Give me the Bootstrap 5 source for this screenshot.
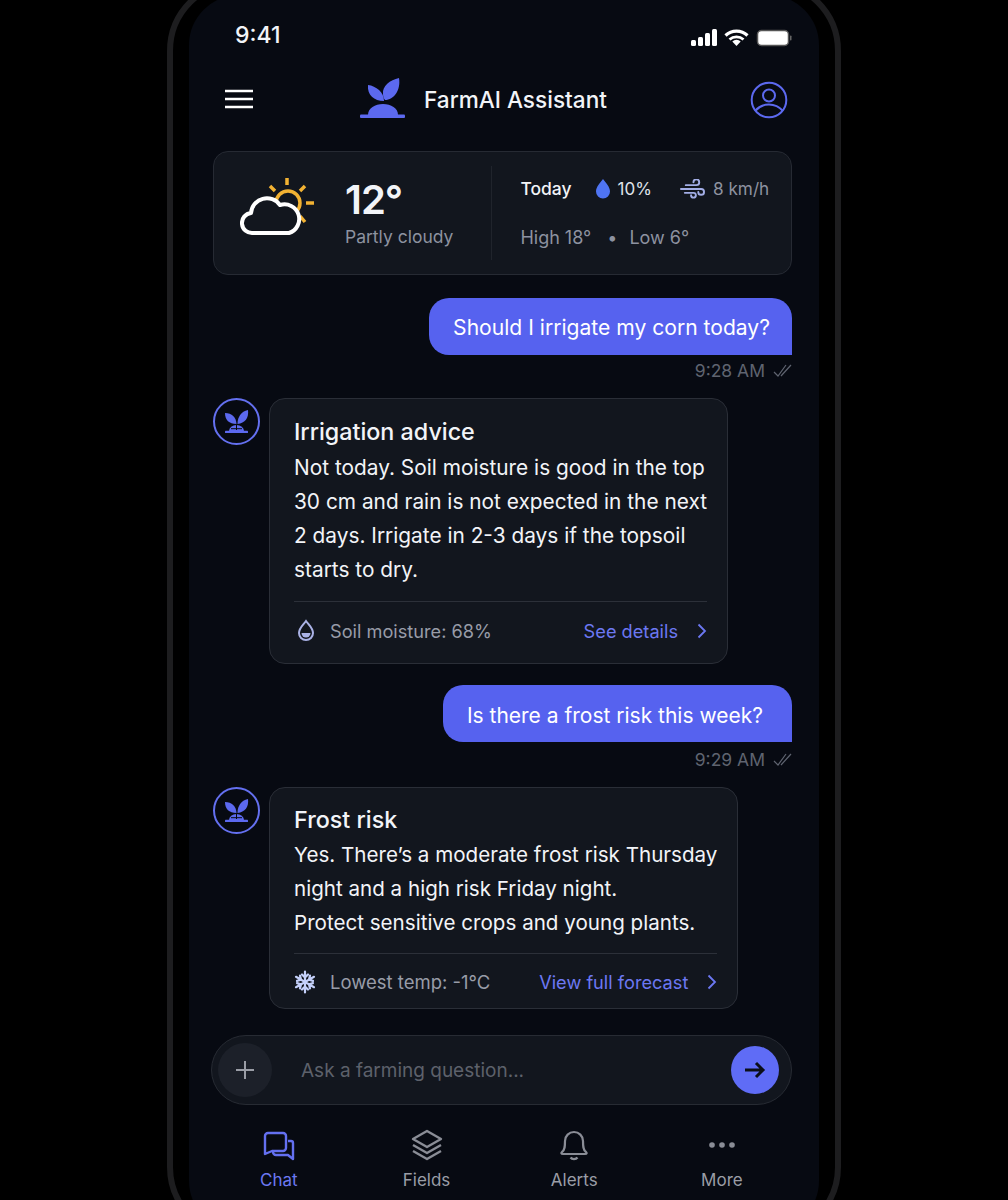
<!DOCTYPE html>
<html lang="en">
<head>
<meta charset="UTF-8">
<meta name="viewport" content="width=device-width, initial-scale=1.0">
<title>FarmAI Assistant</title>
<link href="https://cdn.jsdelivr.net/npm/bootstrap@5.3.3/dist/css/bootstrap.min.css" rel="stylesheet">
<style>
html, body { height: 1200px; overflow: hidden; background: #000; }
body { font-family: Inter, "Liberation Sans", sans-serif; color: #f2f4f8; }
.phone { width: 674px; margin: -21px 0 0 167px; border: 6px solid #1d1d1f; border-radius: 72px; padding: 10px 16px 0; background: #000; height: 1260px; }
.screen { height: 1236px; border-radius: 50px; background: #070a12; padding: 0 27px 0 24px; }
.status { height: 37px; padding: 22px 0 0 22px; box-sizing: content-box; }
.clock { font-size: 23px; font-weight: 500; line-height: 37px; }
.status-icons { margin-top: 4px; }
.head-row { height: 70px; margin-top: 11px; }
.burger { margin: 0 0 2px 12px; }
.brand { margin-left: 107px; }
.brand svg { margin: 0 19px 4px 0; }
.app-title { font-size: 22.6px; font-weight: 500; }
.wx-card { height: 124px; margin-top: 16px; background: #12161e; border: 1px solid #262a33; border-radius: 15px; color: #f2f4f8; }
.wx-icon { margin: 0 29px 0 26px; flex: none; }
.temp { font-size: 40px; font-weight: 600; line-height: 46px; letter-spacing: -1px; }
.muted { color: #8d92a0; }
.wx-sub { font-size: 17.5px; line-height: 24px; margin-top: 2px; }
.wx-left { margin-right: 38px; }
.wx-div { width: 1px; height: 94px; background: #20242c; }
.wx-right { font-size: 18px; line-height: 24px; margin-left: 28px; }
.wx-now { font-size: 17.5px; }
.wx-val { font-size: 17px; margin-right: 28px; color: #dfe2ea; }
.wx-wind { font-size: 17.2px; }
.wx-range { margin-top: 25px; }
.wx-dot { margin: 0 12px 0 16px; }
.q-one { margin-top: 23px; }
.q-two { margin-top: 21px; }
.bubble { background: #5662ef; color: #fff; font-size: 21.1px; height: 57px; border-radius: 20px 20px 0 20px; padding: 3px 22px 0 24px; }
.bubble-short { padding: 4px 29px 0 24px; font-size: 21px; }
.stamp { font-size: 17.5px; line-height: 24px; color: #5f6470; }
.stamp-one { margin-top: 4px; margin-bottom: 15px; }
.stamp-two { margin-top: 6px; margin-bottom: 15px; }
.ai-avatar { width: 47px; height: 47px; border: 2px solid #6470f0; border-radius: 50%; flex: none; }
.msg { background: #12161e; border: 1px solid #2a2e37; border-radius: 16px; color: #f2f4f8; font-size: 20.85px; line-height: 34px; padding: 0 20px 0 24px; margin-left: 9px; }
.msg-tight { font-size: 20.6px; }
.msg-title { font-size: 23.3px; font-weight: 500; line-height: 34px; margin-top: 15px; margin-bottom: 1px; }
.msg-title-low { margin-top: 16px; margin-bottom: 2px; }
.msg-foot { border-top: 1px solid #2c3039; font-size: 18.2px; }
.foot-one { margin-top: 14px; height: 62px; padding-bottom: 3px; }
.foot-two { margin-top: 13px; height: 55px; padding-top: 2px; }
.foot-wide { font-size: 18.5px; }
.foot-icon-soil { margin: 0 15px 0 3px; }
.foot-icon-snow { margin-right: 14px; flex: none; }
.chev { margin-left: 19px; }
.accent { color: #6c78f2; }
.foot-label { color: #989ca8; }
.ask-bar { height: 70px; background: #12161e; border: 1px solid #272b33; border-radius: 35px; margin: 26px 0 0 -2px; padding: 0 12px 0 6px; font-size: 19px; color: #5d616b; }
.ask-text { margin-left: 29px; padding-top: 2px; }
.plus-btn { width: 54px; height: 54px; background: #1c2029; border-radius: 50%; flex: none; }
.send-btn { width: 48px; height: 48px; background: #5f6cf6; border-radius: 50%; flex: none; }
.tab-row { font-size: 17px; color: #9a9da6; margin: 24px 0 0 -8px; }
.tab-item { width: 147.7px; flex: none; }
.tab-item span { margin-top: 7px; }
.tab-on { color: #6c78f2; }
</style>
</head>
<body>

<div class="phone">
  <div class="screen">

    <!-- status bar -->
    <div class="status d-flex justify-content-between align-items-center">
      <span class="clock">9:41</span>
      <svg class="status-icons" width="102" height="20" viewBox="0 0 102 20">
        <g fill="#fff">
          <rect x="1" y="12" width="5" height="6" rx="1.5"/><rect x="8" y="9" width="5" height="9" rx="1.5"/><rect x="15" y="5" width="5" height="13" rx="1.5"/><rect x="22" y="1" width="5" height="17" rx="1.5"/>
          <path d="M46.500 18l-4.200-4.600a6 6 0 0 1 8.400 0z"/>
        </g>
        <g fill="none" stroke="#fff">
          <path d="M35.500 7.500a16 16 0 0 1 22 0" stroke-width="3.200"/><path d="M39.500 11.500a10.500 10.500 0 0 1 14 0" stroke-width="2.800"/>
        </g>
        <rect x="67.500" y="2.500" width="31" height="15" rx="4" fill="#fff" stroke="#555" stroke-width="1.500"/>
        <rect x="100" y="7.500" width="1.500" height="5" rx=".7" fill="#666"/>
      </svg>
    </div>

    <!-- header -->
    <div class="head-row d-flex align-items-center">
      <svg class="burger" width="28" height="20" viewBox="0 0 28 20" fill="none" stroke="#fff" stroke-width="2.600"><path d="M0 2h28M0 10h28M0 18h28"/></svg>
      <div class="brand d-flex align-items-center flex-grow-1">
        <svg width="45" height="40" viewBox="0 0 45 40" fill="#5c69ef">
          <path d="M8 7C16 8 24 14 24 23 14 23 7 17 8 7z"/>
          <path d="M39 0C30 2 22 8 23 16c0 3 1 5 2 6C34 22 41 12 39 0z"/>
          <path d="M8 37c0-7 7-11 15-11s15 4 15 11z"/>
          <rect x="0" y="36.500" width="45" height="3.500" rx="1"/>
        </svg>
        <span class="app-title">FarmAI Assistant</span>
      </div>
      <svg class="me-1" width="38" height="38" viewBox="0 0 38 38" fill="none" stroke="#5c69ef" stroke-width="2"><circle cx="19" cy="19" r="17.300"/><circle cx="19" cy="14.500" r="6"/><path d="M5 30c4-4.500 9-6.500 14-6.500S29 25.500 33 30"/></svg>
    </div>

    <!-- weather -->
    <div class="card wx-card flex-row align-items-center">
      <svg class="wx-icon" width="76" height="70" viewBox="0 0 76 70" fill="none">
        <g stroke="#f2b233" stroke-width="3.500">
          <circle cx="48" cy="25" r="12"/>
          <path d="M47 0v7M30 8l5 5M65 8l-5 5M66 25h8M60 38l5 6"/>
        </g>
        <path d="M13 55a10 10 0 0 1-2-20 16 16 0 0 1 29-8 14 14 0 0 1 9 28z" fill="#12161e" stroke="#fff" stroke-width="4" stroke-linejoin="round"/>
      </svg>
      <div class="wx-left">
        <div class="temp">12°</div>
        <div class="muted wx-sub">Partly cloudy</div>
      </div>
      <div class="wx-div"></div>
      <div class="wx-right">
        <div class="wx-now d-flex align-items-center">
          <span class="fw-medium me-4">Today</span>
          <svg class="me-2" width="14" height="20" viewBox="0 0 14 20" fill="#4f74f2"><path d="M7 0c3 4 7 8 7 12.500a7 7 0 0 1-14 0C0 8 4 4 7 0z"/></svg>
          <span class="wx-val">10%</span>
          <svg class="me-2" width="25" height="20" viewBox="0 0 26 20" fill="none" stroke="#a3aee6" stroke-width="2" stroke-linecap="round"><path d="M6 6h11a3 3 0 1 0-3-3M1 10h21a3 3 0 1 1-3 3M5 14h9a2.500 2.500 0 1 1-2.500 2.500"/></svg>
          <span class="muted wx-wind">8 km/h</span>
        </div>
        <div class="muted d-flex align-items-center wx-range">
          <span>High 18°</span><span class="wx-dot">•</span><span>Low 6°</span>
        </div>
      </div>
    </div>

    <!-- first question -->
    <div class="d-flex justify-content-end q-one">
      <div class="bubble d-flex align-items-center">Should I irrigate my corn today?</div>
    </div>
    <div class="stamp stamp-one d-flex justify-content-end align-items-center">
      9:28 AM
      <svg class="ms-2" width="19" height="14" viewBox="0 0 19 14" fill="none" stroke="#5f6470" stroke-width="1.200"><path d="M1 8l4 4L13 1M8 12L18 1"/></svg>
    </div>

    <!-- first answer -->
    <div class="d-flex">
      <div class="ai-avatar d-flex align-items-center justify-content-center">
        <svg width="25" height="23" viewBox="0 0 25 23" fill="#5c69ef"><path d="M1 3c7 0 11 4 11.500 11C5 14 1 10 1 3z"/><path d="M24 0c1 8-3 13-10.500 14C13.500 7 17 1.500 24 0z"/><path d="M5 21a7.500 6 0 0 1 15 0z"/><path d="M12.500 15v5M7 18.700h11" stroke="#070a12" stroke-width="1"/><rect x="1" y="20.800" width="23" height="2.200" rx=".6"/></svg>
      </div>
      <div class="card msg">
        <div class="msg-title msg-title-low">Irrigation advice</div>
        <div>Not today. Soil moisture is good in the top<br>30 cm and rain is not expected in the next<br>2 days. Irrigate in 2-3 days if the topsoil<br>starts to dry.</div>
        <div class="msg-foot d-flex align-items-center justify-content-between foot-one">
          <span class="d-flex align-items-center foot-label">
            <svg class="foot-icon-soil" width="18" height="24" viewBox="0 0 18 24" fill="none" stroke="#aab2e6" stroke-width="2"><path d="M9 2c3 4 7 7 7 12a7 7 0 0 1-14 0c0-5 4-8 7-12z"/><path d="M4.500 14h9a4.500 4.500 0 0 1-9 0z" fill="#aab2e6" stroke="none"/></svg>
            Soil moisture: 68%
          </span>
          <span class="d-flex align-items-center accent">See details
            <svg class="chev" width="10" height="16" viewBox="0 0 10 16" fill="none" stroke="#6c78f2" stroke-width="1.800"><path d="M1.500 1.500L8 8l-6.500 6.500"/></svg>
          </span>
        </div>
      </div>
    </div>

    <!-- second question -->
    <div class="d-flex justify-content-end q-two">
      <div class="bubble bubble-short d-flex align-items-center">Is there a frost risk this week?</div>
    </div>
    <div class="stamp stamp-two d-flex justify-content-end align-items-center">
      9:29 AM
      <svg class="ms-2" width="19" height="14" viewBox="0 0 19 14" fill="none" stroke="#5f6470" stroke-width="1.200"><path d="M1 8l4 4L13 1M8 12L18 1"/></svg>
    </div>

    <!-- second answer -->
    <div class="d-flex">
      <div class="ai-avatar d-flex align-items-center justify-content-center">
        <svg width="25" height="23" viewBox="0 0 25 23" fill="#5c69ef"><path d="M1 3c7 0 11 4 11.500 11C5 14 1 10 1 3z"/><path d="M24 0c1 8-3 13-10.500 14C13.500 7 17 1.500 24 0z"/><path d="M5 21a7.500 6 0 0 1 15 0z"/><path d="M12.500 15v5M7 18.700h11" stroke="#070a12" stroke-width="1"/><rect x="1" y="20.800" width="23" height="2.200" rx=".6"/></svg>
      </div>
      <div class="card msg msg-tight">
        <div class="msg-title">Frost risk</div>
        <div>Yes. There’s a moderate frost risk Thursday<br>night and a high risk Friday night.<br>Protect sensitive crops and young plants.</div>
        <div class="msg-foot d-flex align-items-center justify-content-between foot-two">
          <span class="d-flex align-items-center foot-label foot-wide">
            <svg class="foot-icon-snow" width="22" height="24" viewBox="0 0 22 24" fill="none" stroke="#c4d0fa" stroke-width="2.200" stroke-linecap="round" stroke-linejoin="round"><path d="M11 1.500v21M2 6.800l18 10.400M20 6.800L2 17.200M8 4.500l3 3 3-3M8 19.500l3-3 3 3M19 10.850l-4.100-1.100 1.100-4.100M3 10.850l4.100-1.100-1.100-4.100M19 13.150l-4.100 1.100 1.100 4.100M3 13.150l4.100 1.100-1.100 4.100"/></svg>
            Lowest temp: -1°C
          </span>
          <span class="d-flex align-items-center accent">View full forecast
            <svg class="chev" width="10" height="16" viewBox="0 0 10 16" fill="none" stroke="#6c78f2" stroke-width="1.800"><path d="M1.500 1.500L8 8l-6.500 6.500"/></svg>
          </span>
        </div>
      </div>
    </div>

    <!-- input -->
    <div class="ask-bar d-flex align-items-center">
      <div class="plus-btn d-flex align-items-center justify-content-center">
        <svg width="18" height="18" viewBox="0 0 18 18" stroke="#9a9da6" stroke-width="2"><path d="M9 0v18M0 9h18"/></svg>
      </div>
      <span class="ask-text flex-grow-1">Ask a farming question...</span>
      <div class="send-btn d-flex align-items-center justify-content-center">
        <svg width="22" height="18" viewBox="0 0 22 18" fill="none" stroke="#0b0e18" stroke-width="3"><path d="M1 9h18M12 2l7 7-7 7"/></svg>
      </div>
    </div>

    <!-- tabs -->
    <div class="tab-row d-flex">
      <div class="tab-item tab-on d-flex flex-column align-items-center">
        <svg width="32" height="32" viewBox="0 0 32 32" fill="none" stroke="#6470f0" stroke-width="2.400" stroke-linejoin="round"><path d="M5 4h15a3 3 0 0 1 3 3v12a3 3 0 0 1-3 3H9l-7 3V7a3 3 0 0 1 3-3z"/><path d="M25 12h3a2 2 0 0 1 2 2v16l-5-4H13a3 3 0 0 1-3-3v-1"/></svg>
        <span>Chat</span>
      </div>
      <div class="tab-item d-flex flex-column align-items-center">
        <svg width="32" height="32" viewBox="0 0 32 32" fill="none" stroke="#8a8d96" stroke-width="2.400" stroke-linejoin="round"><path d="M16 2l14 8-14 8-14-8z"/><path d="M2 16l14 8 14-8M2 22l14 8 14-8"/></svg>
        <span>Fields</span>
      </div>
      <div class="tab-item d-flex flex-column align-items-center">
        <svg width="32" height="32" viewBox="0 0 32 32" fill="none" stroke="#8a8d96" stroke-width="2.200" stroke-linejoin="round"><path d="M4 23c3-2 3-6 3-11a9 9 0 0 1 18 0c0 5 0 9 3 11 1 1 1 2-1 2H5c-2 0-2-1-1-2z"/><path d="M12.500 28.500a4 3 0 0 0 7 0"/></svg>
        <span>Alerts</span>
      </div>
      <div class="tab-item d-flex flex-column align-items-center">
        <svg width="32" height="32" viewBox="0 0 32 32" fill="#8a8d96"><circle cx="6" cy="16" r="2.800"/><circle cx="16" cy="16" r="2.800"/><circle cx="26" cy="16" r="2.800"/></svg>
        <span>More</span>
      </div>
    </div>

  </div>
</div>

<script src="https://cdn.jsdelivr.net/npm/bootstrap@5.3.3/dist/js/bootstrap.bundle.min.js"></script>
</body>
</html>
